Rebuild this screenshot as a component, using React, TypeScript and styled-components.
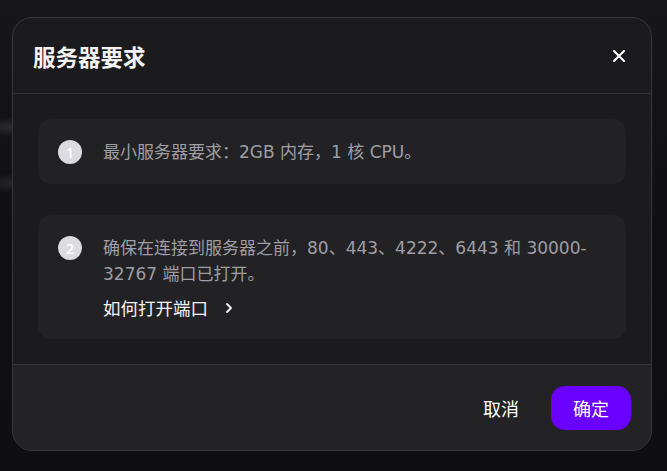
import React from "react";
import styled, { createGlobalStyle } from "styled-components";

const Global = createGlobalStyle`
  html, body { margin: 0; padding: 0; }
  body {
    width: 667px;
    height: 471px;
    overflow: hidden;
    background:
      radial-gradient(ellipse 40px 10px at 10px 127px, rgba(255,255,255,0.10), transparent),
      radial-gradient(ellipse 40px 10px at 10px 183px, rgba(255,255,255,0.08), transparent),
      linear-gradient(180deg, #17161a 0%, #111013 40%, #0f0f11 100%);
    font-family: "Noto Sans", "Noto Sans CJK SC", sans-serif;
  }
`;

const Backdrop = styled.div`
  padding: 17px 15px 20px 12px;
`;

const Dialog = styled.div`
  width: 640px;
  height: 434px;
  box-sizing: border-box;
  background: #1b1b1d;
  border: 1px solid #38383c;
  border-radius: 20px;
  overflow: hidden;
  display: flex;
  flex-direction: column;
`;

const Header = styled.div`
  height: 76px;
  box-sizing: border-box;
  display: flex;
  align-items: center;
  justify-content: space-between;
  padding: 0 25px 0 20px;
  border-bottom: 1px solid #323236;
`;

const Title = styled.h2`
  margin: 0;
  font-family: "Noto Sans CJK SC", sans-serif;
  font-size: 22.5px;
  font-weight: 600;
  color: #f4f4f6;
`;

const CloseButton = styled.button`
  background: none;
  border: 0;
  padding: 0;
  width: 14px;
  height: 14px;
  display: flex;
  align-items: center;
  justify-content: center;
  color: #ffffff;
`;

const Body = styled.div`
  flex: 1;
  display: flex;
  flex-direction: column;
  gap: 31px;
  padding: 25px 25px 0 25px;
`;

const Card = styled.div`
  background: #222224;
  border-radius: 13px;
  padding: 20px 20px 19px 20px;
  display: flex;
  align-items: flex-start;
  gap: 21px;
`;

const StepNum = styled.div`
  flex: none;
  width: 24px;
  height: 24px;
  margin-top: 1px;
  border-radius: 50%;
  background: #dcdce0;
  color: #ffffff;
  font-family: "Noto Sans", sans-serif;
  font-size: 15px;
  font-weight: 500;
  display: flex;
  align-items: center;
  justify-content: center;
`;

const Content = styled.div`
  flex: 1;
  display: flex;
  flex-direction: column;
  gap: 9px;
`;

const Text = styled.p`
  margin: 0;
  font-family: "DejaVu Sans", "Noto Sans CJK SC", sans-serif;
  font-size: 17px;
  line-height: 26px;
  color: #9e9ea4;
`;

const Link = styled.a`
  display: inline-flex;
  align-items: center;
  gap: 17px;
  font-family: "Noto Sans CJK SC", sans-serif;
  font-size: 17.5px;
  line-height: 24px;
  color: #f4f4f6;
  text-decoration: none;
`;

const Footer = styled.div`
  height: 86px;
  box-sizing: border-box;
  background: #232325;
  border-top: 1px solid #38383c;
  display: flex;
  align-items: center;
  justify-content: flex-end;
  gap: 10px;
  padding: 0 20px;
`;

const Button = styled.button<{ $primary?: boolean }>`
  height: 44px;
  padding: 0 22px;
  border: 0;
  border-radius: 14px;
  background: ${(p) => (p.$primary ? "#6a00ff" : "transparent")};
  color: #ffffff;
  font-family: "Noto Sans CJK SC", sans-serif;
  font-size: 18px;
  font-weight: 400;
`;

export default function App() {
  return (
    <>
      <Global />
      <Backdrop>
        <Dialog>
          <Header>
            <Title>服务器要求</Title>
            <CloseButton aria-label="close">
              <svg width="12" height="12" viewBox="0 0 12 12">
                <path d="M1 1 L11 11 M11 1 L1 11" stroke="currentColor" strokeWidth="2" strokeLinecap="round" />
              </svg>
            </CloseButton>
          </Header>
          <Body>
            <Card>
              <StepNum>1</StepNum>
              <Content>
                <Text>最小服务器要求：2GB 内存，1 核 CPU。</Text>
              </Content>
            </Card>
            <Card>
              <StepNum>2</StepNum>
              <Content>
                <Text>确保在连接到服务器之前，80、443、4222、6443 和 30000-32767 端口已打开。</Text>
                <Link href="#">
                  如何打开端口
                  <svg width="8" height="12" viewBox="0 0 8 12">
                    <path d="M2 2 L6 6 L2 10" stroke="currentColor" strokeWidth="1.8" fill="none" strokeLinecap="round" strokeLinejoin="round" />
                  </svg>
                </Link>
              </Content>
            </Card>
          </Body>
          <Footer>
            <Button>取消</Button>
            <Button $primary>确定</Button>
          </Footer>
        </Dialog>
      </Backdrop>
    </>
  );
}
